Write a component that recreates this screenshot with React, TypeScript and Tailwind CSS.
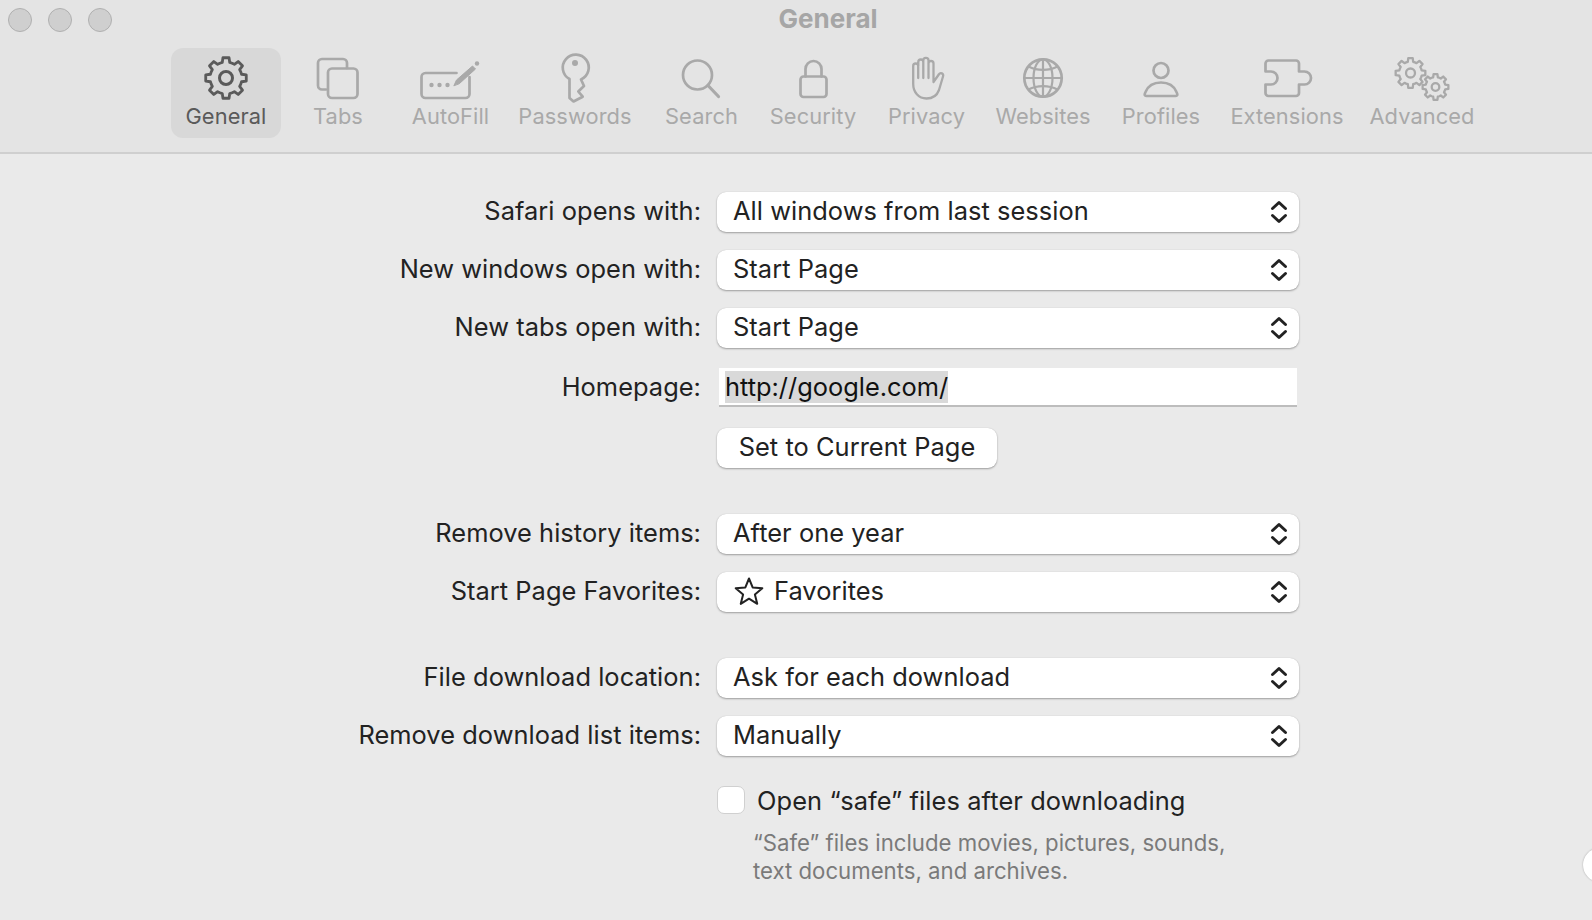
import React from "react";

function gearPath(cx: number, cy: number, rOut: number, rIn: number, teeth: number) {
  const pts: string[] = [];
  const step = (Math.PI * 2) / teeth;
  for (let i = 0; i < teeth; i++) {
    const a = -Math.PI / 2 + i * step;
    const offs: [number, number][] = [
      [-0.5, rIn],
      [-0.3, rIn],
      [-0.19, rOut],
      [0.19, rOut],
      [0.3, rIn],
    ];
    for (const [o, r] of offs) {
      const t = a + o * step;
      pts.push(`${(cx + r * Math.cos(t)).toFixed(2)} ${(cy + r * Math.sin(t)).toFixed(2)}`);
    }
  }
  return "M" + pts.join("L") + "Z";
}

function starPath(cx: number, cy: number, R: number, r: number) {
  const pts: string[] = [];
  for (let i = 0; i < 10; i++) {
    const a = -Math.PI / 2 + (i * Math.PI) / 5;
    const q = i % 2 === 0 ? R : r;
    pts.push(`${(cx + q * Math.cos(a)).toFixed(2)} ${(cy + q * Math.sin(a)).toFixed(2)}`);
  }
  return "M" + pts.join("L") + "Z";
}

const font = "font-['Inter','Liberation_Sans',sans-serif]";

function Svg({ box, children }: { box: string; children: React.ReactNode }) {
  return (
    <svg
      viewBox={box}
      width={64}
      height={48}
      fill="none"
      stroke="currentColor"
      strokeWidth={2.7}
      strokeLinecap="round"
      strokeLinejoin="round"
      className="block overflow-visible"
    >
      {children}
    </svg>
  );
}

const tools = [
  {
    label: "General",
    w: "w-[110px]",
    icon: (
      <Svg box="194 54 64 48">
        <path d={gearPath(226, 78, 20.5, 16, 8)} strokeWidth={2.8} />
        <circle cx={226} cy={78} r={6.5} strokeWidth={3} />
      </Svg>
    ),
  },
  {
    label: "Tabs",
    w: "w-[114px]",
    icon: (
      <Svg box="306 54 64 48">
        <path d="M326 89.5H322a4 4 0 0 1-4-4V63a4 4 0 0 1 4-4H343a4 4 0 0 1 4 4V68" />
        <rect x={328} y={68.5} width={29.5} height={29.5} rx={4} />
      </Svg>
    ),
  },
  {
    label: "AutoFill",
    w: "w-[111px]",
    icon: (
      <Svg box="418.5 54 64 48">
        <path d="M456 73H425a4 4 0 0 0-4 4V94a4 4 0 0 0 4 4H465a4 4 0 0 0 4-4V77" />
        <circle cx={431} cy={85} r={2.2} fill="currentColor" stroke="none" />
        <circle cx={439} cy={85} r={2.2} fill="currentColor" stroke="none" />
        <circle cx={447} cy={85} r={2.2} fill="currentColor" stroke="none" />
        <path d="M453.5 85.5L456 80L472 66L475 69L459 83.5Z" fill="currentColor" strokeWidth={1} />
        <circle cx={476.5} cy={63.5} r={2.2} fill="currentColor" stroke="none" />
      </Svg>
    ),
  },
  {
    label: "Passwords",
    w: "w-[138px]",
    icon: (
      <Svg box="543 54 64 48">
        <path d="M569.5 79A13 13 0 1 1 581 79.5L581.7 81L584 86L578.3 91.5L582.7 96.7L573.5 101.5L569.5 98Z" />
        <circle cx={575} cy={63} r={3} fill="currentColor" stroke="none" />
      </Svg>
    ),
  },
  {
    label: "Search",
    w: "w-[115px]",
    icon: (
      <Svg box="669.5 54 64 48">
        <circle cx={697} cy={75} r={14.5} />
        <path d="M707.5 85.5L718 96.5" strokeWidth={3.2} />
      </Svg>
    ),
  },
  {
    label: "Security",
    w: "w-[108px]",
    icon: (
      <Svg box="781 54 64 48">
        <rect x={800.5} y={76.5} width={26} height={20.5} rx={3} />
        <path d="M805.5 76.5V69a8 8 0 0 1 16 0V76.5" />
      </Svg>
    ),
  },
  {
    label: "Privacy",
    w: "w-[119px]",
    icon: (
      <Svg box="894.5 54 64 48">
        <path d="M917.7 78V66a2.5 2.5 0 0 0-5 0V84C912.7 92 918 98.5 926 98.5C932 98.5 936.5 95.5 938.5 90L942.5 76.5a2.3 2.3 0 0 0-4.2-2L933 82V63.5a2.5 2.5 0 0 0-5 0V78V60.5a2.6 2.6 0 0 0-5.2 0V78V62a2.5 2.5 0 0 0-5 0V66" strokeWidth={2.3} />
      </Svg>
    ),
  },
  {
    label: "Websites",
    w: "w-[114px]",
    icon: (
      <Svg box="1012 54 64 48">
        <circle cx={1044} cy={78} r={18.7} />
        <ellipse cx={1044} cy={78} rx={9.5} ry={18.7} strokeWidth={2.2} />
        <path d="M1044 59.3V96.7M1025.3 78H1062.7" strokeWidth={2.2} />
        <path d="M1029.5 66.5C1038 71 1050 71 1058.5 66.5M1029.5 89.5C1038 85 1050 85 1058.5 89.5" strokeWidth={2.2} />
      </Svg>
    ),
  },
  {
    label: "Profiles",
    w: "w-[122px]",
    icon: (
      <Svg box="1128 54 64 48">
        <circle cx={1160} cy={70.5} r={7.5} />
        <path d="M1145.5 96C1143 96 1143.5 94 1144.5 92C1147 86 1153 82.5 1160 82.5C1167 82.5 1173 86 1175.5 92C1176.5 94 1177 96 1174.5 96Z" />
      </Svg>
    ),
  },
  {
    label: "Extensions",
    w: "w-[130px]",
    icon: (
      <Svg box="1255 54 64 48">
        <path d="M1268.5 60.5H1296a3 3 0 0 1 3 3V71.5H1304.5a6.5 6.5 0 1 1 0 13H1299V93a3 3 0 0 1-3 3H1268.5a3 3 0 0 1-3-3V84.5H1271a6.5 6.5 0 0 0 0-13H1265.5V63.5a3 3 0 0 1 3-3Z" />
      </Svg>
    ),
  },
  {
    label: "Advanced",
    w: "w-[140px]",
    icon: (
      <Svg box="1390 54 64 48">
        <path d={gearPath(1410.5, 73, 15, 11.5, 8)} strokeWidth={2.3} />
        <circle cx={1410.5} cy={73} r={4.5} strokeWidth={2.3} />
        <path d={gearPath(1435.5, 87, 13, 10, 8)} strokeWidth={2.3} />
        <circle cx={1435.5} cy={87} r={3.8} strokeWidth={2.3} />
      </Svg>
    ),
  },
];

function Chevrons() {
  return (
    <svg
      width={18}
      height={24}
      viewBox="0 0 18 24"
      fill="none"
      stroke="#222222"
      strokeWidth={3}
      strokeLinecap="round"
      strokeLinejoin="round"
      className="shrink-0"
    >
      <path d="M2.5 8.5L9 2.5L15.5 8.5" />
      <path d="M2.5 15.5L9 21.5L15.5 15.5" />
    </svg>
  );
}

function Label({ children }: { children: React.ReactNode }) {
  return <div className="w-[701px] pb-[2px] text-right whitespace-nowrap">{children}</div>;
}

function Select({ label, children }: { label: string; children?: React.ReactNode }) {
  return (
    <div className="flex flex-row items-center gap-4">
      <Label>{label}</Label>
      <div className="flex h-10 w-[582px] items-center justify-between rounded-[9px] bg-white pl-[16px] pr-[11px] shadow-[0_1px_2px_rgba(0,0,0,0.32),0_0_1px_rgba(0,0,0,0.14)]">
        {children}
      </div>
    </div>
  );
}

export default function App() {
  return (
    <div className={`relative h-[920px] w-[1592px] overflow-hidden bg-[#eaeaea] text-[25.4px] leading-[32px] tracking-[0.05px] text-[#222222] ${font}`}>
      <header className="relative h-[154px] border-b-2 border-[#cfcfcf] bg-[#e4e4e4]">
        <div className="flex h-12 items-start gap-4 pl-2 pt-2">
          <span className="h-6 w-6 rounded-full border border-[#b0b0b0] bg-[#cfcfcf]" />
          <span className="h-6 w-6 rounded-full border border-[#b0b0b0] bg-[#cfcfcf]" />
          <span className="h-6 w-6 rounded-full border border-[#b0b0b0] bg-[#cfcfcf]" />
        </div>
        <div className="absolute left-0 right-0 top-[3px] pl-[64px] text-center text-[26px] font-bold leading-[32px] tracking-normal text-[#a6a6a6]">
          General
        </div>
        <nav className="flex pl-[171px]">
          {tools.map((t, i) => (
            <div
              key={t.label}
              className={`flex h-[90px] ${t.w} shrink-0 flex-col items-center pt-[6px] text-[21.8px] leading-[28px] tracking-[0.1px] ${
                i === 0 ? "rounded-[12px] bg-[#d8d8d8] text-[#5a5a5a]" : "text-[#a9a9a9]"
              }`}
            >
              {t.icon}
              <span className="whitespace-nowrap">{t.label}</span>
            </div>
          ))}
        </nav>
      </header>

      <main className="flex flex-col pt-[38px]">
        <Select label="Safari opens with:">
          <span className="pb-[2px]">All windows from last session</span>
          <Chevrons />
        </Select>
        <div className="mt-[18px]">
          <Select label="New windows open with:">
            <span className="pb-[2px]">Start Page</span>
            <Chevrons />
          </Select>
        </div>
        <div className="mt-[18px]">
          <Select label="New tabs open with:">
            <span className="pb-[2px]">Start Page</span>
            <Chevrons />
          </Select>
        </div>
        <div className="mt-5 flex flex-row items-center gap-4">
          <Label>Homepage:</Label>
          <div className="ml-[2px] flex h-[39px] w-[578px] items-center border-b-2 border-[#bdbdbd] bg-white pl-[6px] tracking-normal text-[#111111]">
            <span className="bg-[#d9d9d9] leading-[32px]">http://google.com/</span>
          </div>
        </div>
        <div className="mt-[21px] flex flex-row gap-4">
          <div className="w-[701px]" />
          <button className="h-10 w-[280px] rounded-[9px] bg-white pb-[2px] text-center shadow-[0_1px_2px_rgba(0,0,0,0.32),0_0_1px_rgba(0,0,0,0.14)]">
            Set to Current Page
          </button>
        </div>
        <div className="mt-[46px]">
          <Select label="Remove history items:">
            <span className="pb-[2px]">After one year</span>
            <Chevrons />
          </Select>
        </div>
        <div className="mt-[18px]">
          <Select label="Start Page Favorites:">
            <span className="flex items-center gap-[10px]">
              <svg width={30} height={30} viewBox="0 0 30 30" fill="none" stroke="#222222" strokeWidth={2} strokeLinejoin="round" className="ml-px shrink-0">
                <path d={starPath(15, 15.5, 14, 6.2)} />
              </svg>
              <span className="pb-[2px]">Favorites</span>
            </span>
            <Chevrons />
          </Select>
        </div>
        <div className="mt-[46px]">
          <Select label="File download location:">
            <span className="pb-[2px]">Ask for each download</span>
            <Chevrons />
          </Select>
        </div>
        <div className="mt-[18px]">
          <Select label="Remove download list items:">
            <span className="pb-[2px]">Manually</span>
            <Chevrons />
          </Select>
        </div>
        <div className="mt-[29px] flex flex-row items-center">
          <div className="w-[717px]" />
          <span className="mb-[2px] h-7 w-7 rounded-[7px] border border-[#d0d0d0] bg-white" />
          <span className="ml-3 tracking-[0.1px]">Open “safe” files after downloading</span>
        </div>
        <div className="ml-[753px] mt-[12px] w-[520px] text-[22.2px] leading-[28px] tracking-normal text-[#7a7a7a]">
          “Safe” files include movies, pictures, sounds,
          <br />
          text documents, and archives.
        </div>
      </main>

      <div className="absolute left-[1583px] top-[848px] h-[34px] w-[34px] rounded-full bg-white shadow-[0_0_2px_rgba(0,0,0,0.3)]" />
    </div>
  );
}
